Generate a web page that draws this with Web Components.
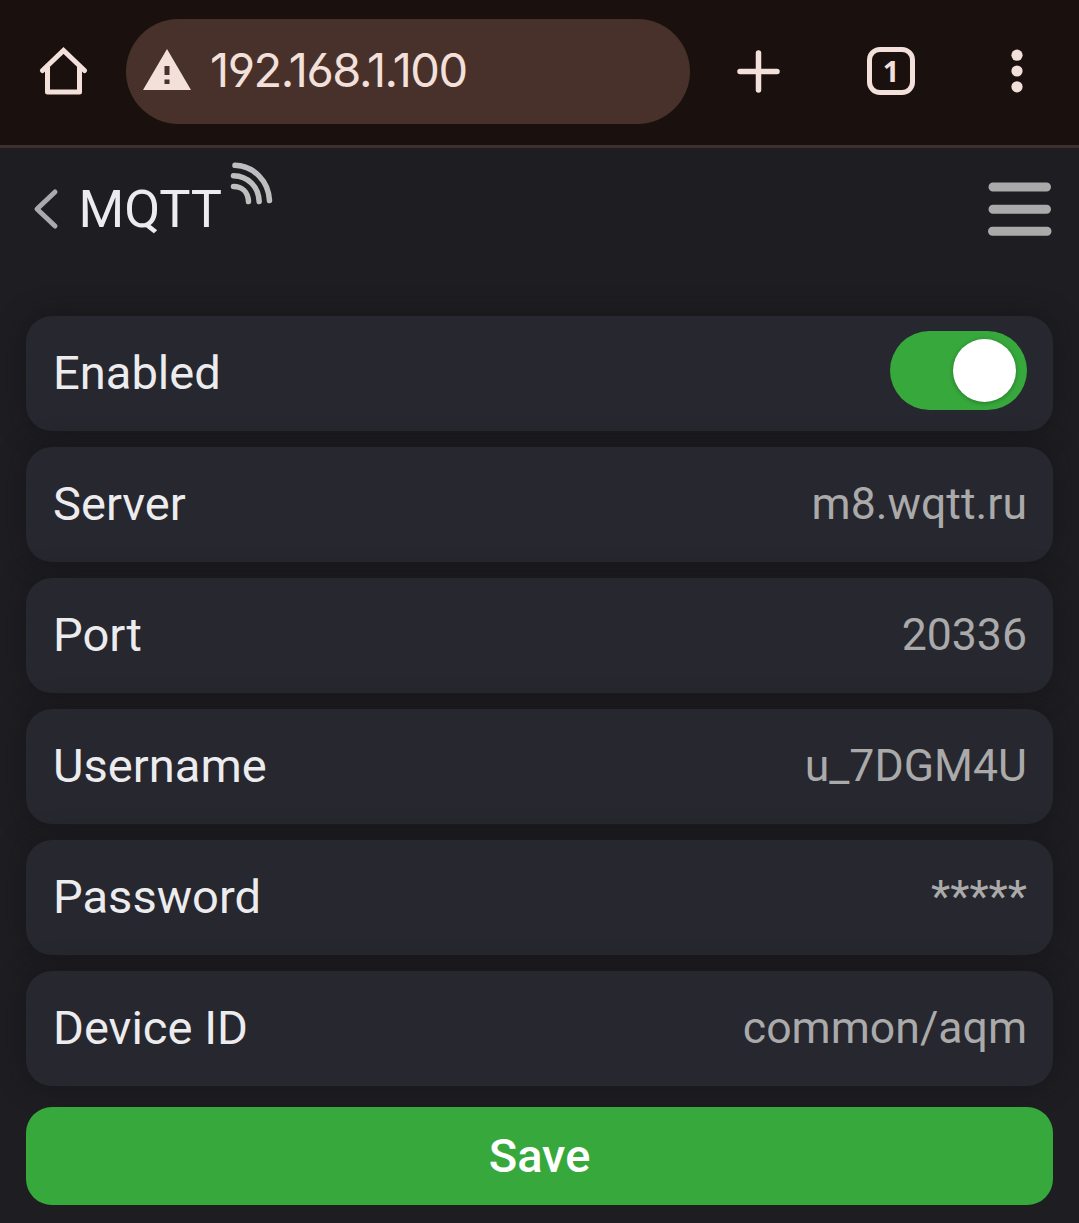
<!DOCTYPE html>
<html lang="en">
<head>
<meta charset="utf-8">
<title>MQTT</title>
<style>
html, body { margin: 0; height: 100%; background: #1d1d22; }
body { font-family: Roboto, "Liberation Sans", sans-serif; overflow: hidden; }
</style>
</head>
<body>
<mqtt-app></mqtt-app>
<script>
const define = (name, html) => customElements.define(name, class extends HTMLElement {
  constructor() {
    super();
    const t = document.createElement('template');
    t.innerHTML = html;
    this.attachShadow({ mode: 'open' }).append(t.content.cloneNode(true));
  }
});

define('browser-bar', `
<style>
:host { display: flex; align-items: center; box-sizing: border-box; height: 148px; padding: 0 0 2px 39px; background: #1a100e; border-bottom: 3px solid #3f3030; color: #f3e0da; }
svg { display: block; flex: none; }
.home, .plus, .dots { margin-bottom: 1px; }
.url { display: flex; align-items: center; box-sizing: border-box; width: 564px; height: 105px; margin-left: 38px; padding: 0 0 4px 17px; border-radius: 53px; background: #48312a; }
.url span { margin-left: 19px; font: 400 47px/56px Inter, sans-serif; letter-spacing: -1.45px; font-feature-settings: "cv03", "cv04"; }
.plus { margin-left: 47px; }
.tabs { display: flex; align-items: center; justify-content: center; box-sizing: border-box; width: 48px; height: 48px; margin: 0 0 2px 87px; border: 5px solid; border-radius: 13px; font: 700 29px/38px "Open Sans", sans-serif; }
.dots { margin-left: 94.500px; }
</style>
<svg class="home" width="49" height="50" viewBox="0 0 49 50" fill="none" stroke="currentColor" stroke-width="5" stroke-linejoin="round"><path stroke-linejoin="miter" stroke-linecap="round" d="M3.500 24.500 24.500 4.500 45.500 24.500"/><path d="M8.500 21V46H40.500V21"/></svg>
<div class="url">
<svg width="48" height="41" viewBox="0 0 48 41"><path fill="currentColor" fill-rule="evenodd" d="M24 0 48 41H0ZM21.500 17V26H26.500V17ZM21.500 30.500V35H26.500V30.500Z"/></svg>
<span>192.168.1.100</span>
</div>
<svg class="plus" width="43" height="43" viewBox="0 0 43 43" stroke="currentColor" stroke-width="5.500" stroke-linecap="round"><path d="M21.500 3V40M3 21.500H40"/></svg>
<div class="tabs">1</div>
<svg class="dots" width="14" height="44" viewBox="0 0 14 44" fill="currentColor"><circle cx="7" cy="6.200" r="5.600"/><circle cx="7" cy="22" r="5.600"/><circle cx="7" cy="37.800" r="5.600"/></svg>
`);

define('page-header', `
<style>
:host { display: flex; align-items: flex-start; box-sizing: border-box; height: 168px; padding: 0 27px 0 33px; }
svg { display: block; flex: none; }
.back { margin-top: 40px; }
h1 { margin: 31px 0 0 19.500px; font-size: 52.400px; line-height: 60px; font-weight: 400; color: #ececee; }
.signal { margin: 13px 0 0 6.500px; }
.menu { margin: 34px 0 0 auto; }
</style>
<svg class="back" width="26" height="42" viewBox="0 0 26 42" fill="none" stroke="#aaa" stroke-width="5" stroke-linecap="round" stroke-linejoin="round"><path d="M22 4 4 21 22 38"/></svg>
<h1><slot></slot></h1>
<svg class="signal" width="44" height="46" viewBox="0 0 44 46" fill="none" stroke="#bebebe" stroke-width="5.500" stroke-linecap="round"><path d="M6 4.300C25 5 39.500 20 40.500 39.500M4.500 14.700C19 15 29.500 25.500 30.200 40.500M4.500 25.500C13 25.500 19 31 19.500 40.500"/></svg>
<svg class="menu" width="65" height="56" viewBox="0 0 65 56" stroke="#aaa" stroke-width="9" stroke-linecap="round"><path d="M6 5H59.500M6 27.300H59.500M5.500 49.300H60"/></svg>
`);

define('setting-row', `
<style>
:host { display: flex; align-items: center; justify-content: space-between; box-sizing: border-box; height: 115px; padding: 0 26px; border-radius: 26px; background: #27272f; box-shadow: 0 0 26px rgba(20,20,20,.55); }
.label { padding: 0 0 2px 1px; font-size: 47.100px; line-height: 56px; color: #ececee; }
.value { font-size: 44.600px; line-height: 53px; color: #aaa; }
</style>
<span class="label"><slot name="label"></slot></span><span class="value"><slot></slot></span>
`);

define('toggle-switch', `
<style>
:host { display: flex; align-items: center; justify-content: flex-end; box-sizing: border-box; width: 137px; height: 79px; margin-top: -7px; padding-right: 11px; border-radius: 40px; background: #37a93c; }
i { width: 63px; height: 63px; border-radius: 50%; background: #fff; box-shadow: 0 1px 5px rgba(0,0,0,.3); }
</style><i></i>
`);

define('save-button', `
<style>
:host { display: block; }
button { display: block; width: 100%; height: 98px; padding: 0 0 1px; border: 0; border-radius: 26px; background: #37a93c; color: #fff; font: 500 47px/56px Roboto, sans-serif; }
</style><button><slot></slot></button>
`);

define('mqtt-app', `
<style>
:host { display: block; height: 1223px; background: #1d1d22; }
main { display: flex; flex-direction: column; gap: 16px; padding: 0 26px; }
save-button { margin-top: 5px; }
</style>
<browser-bar></browser-bar>
<page-header>MQTT</page-header>
<main>
<setting-row><span slot="label">Enabled</span><toggle-switch></toggle-switch></setting-row>
<setting-row><span slot="label">Server</span>m8.wqtt.ru</setting-row>
<setting-row><span slot="label">Port</span>20336</setting-row>
<setting-row><span slot="label">Username</span>u_7DGM4U</setting-row>
<setting-row><span slot="label">Password</span>*****</setting-row>
<setting-row><span slot="label">Device ID</span>common/aqm</setting-row>
<save-button>Save</save-button>
</main>
`);
</script>
</body>
</html>
